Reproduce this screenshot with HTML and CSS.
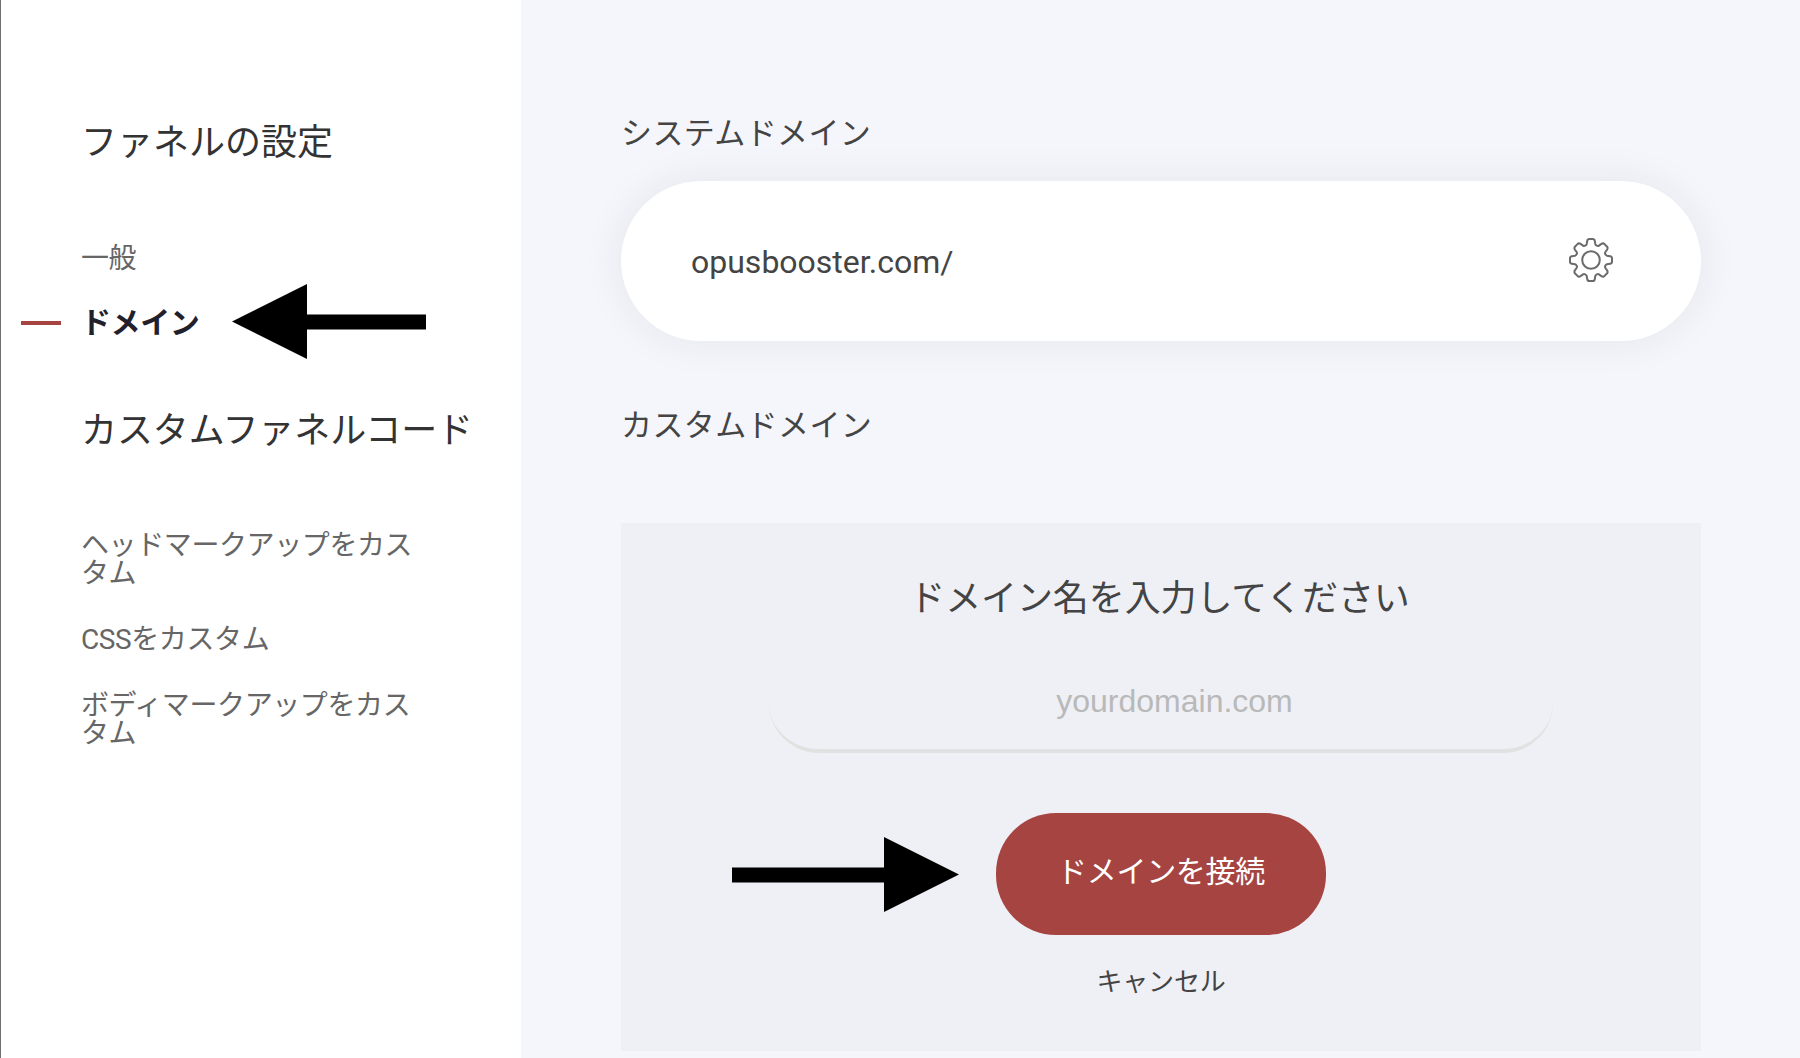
FILE: index.html
```html
<!DOCTYPE html>
<html lang="ja">
<head>
<meta charset="utf-8">
<title>ファネルの設定</title>
<link rel="stylesheet" href="styles.css">
</head>
<body>
<div class="app">
  <aside class="sidebar">
    <h2 class="sidebar-title">ファネルの設定</h2>
    <nav class="menu">
      <a class="menu-item">一般</a>
      <a class="menu-item active"><span class="marker"></span>ドメイン</a>
    </nav>
    <h2 class="sidebar-title code-title">カスタムファネルコード</h2>
    <nav class="menu code-menu">
      <a class="menu-item">ヘッドマークアップをカス<br>タム</a>
      <a class="menu-item">CSSをカスタム</a>
      <a class="menu-item">ボディマークアップをカス<br>タム</a>
    </nav>
  </aside>
  <main class="content">
    <h3 class="section-title">システムドメイン</h3>
    <section class="domain-card">
      <span class="domain-name">opusbooster.com/</span>
      <svg class="gear" viewBox="-23 -23 46 46" fill="none" stroke="#6b6b6b" stroke-width="2" stroke-linejoin="round">
        <circle r="8.8"/>
        <path d="M-3.8 -19Q-3.5 -21 -1.7 -21H1.7Q3.5 -21 3.8 -19L4.3 -16Q4.6 -14.8 5.8 -14.3Q7 -13.7 8 -14.4L10.4 -16.1Q12.1 -17.2 13.5 -15.9L15.9 -13.5Q17.2 -12.1 16.1 -10.4L14.4 -8Q13.7 -7 14.3 -5.8Q14.8 -4.6 16 -4.3L19 -3.8Q21 -3.5 21 -1.7V1.7Q21 3.5 19 3.8L16 4.3Q14.8 4.6 14.3 5.8Q13.7 7 14.4 8L16.1 10.4Q17.2 12.1 15.9 13.5L13.5 15.9Q12.1 17.2 10.4 16.1L8 14.4Q7 13.7 5.8 14.3Q4.6 14.8 4.3 16L3.8 19Q3.5 21 1.7 21H-1.7Q-3.5 21 -3.8 19L-4.3 16Q-4.6 14.8 -5.8 14.3Q-7 13.7 -8 14.4L-10.4 16.1Q-12.1 17.2 -13.5 15.9L-15.9 13.5Q-17.2 12.1 -16.1 10.4L-14.4 8Q-13.7 7 -14.3 5.8Q-14.8 4.6 -16 4.3L-19 3.8Q-21 3.5 -21 1.7V-1.7Q-21 -3.5 -19 -3.8L-16 -4.3Q-14.8 -4.6 -14.3 -5.8Q-13.7 -7 -14.4 -8L-16.1 -10.4Q-17.2 -12.1 -15.9 -13.5L-13.5 -15.9Q-12.1 -17.2 -10.4 -16.1L-8 -14.4Q-7 -13.7 -5.8 -14.3Q-4.6 -14.8 -4.3 -16Z"/>
      </svg>
    </section>
    <h3 class="section-title custom-title">カスタムドメイン</h3>
    <section class="connect-panel">
      <h2 class="panel-title">ドメイン名を入力してください</h2>
      <input class="domain-input" type="text" placeholder="yourdomain.com">
      <button class="connect-button">ドメインを接続</button>
      <a class="cancel">キャンセル</a>
    </section>
  </main>
  <svg class="arrow arrow-left" viewBox="0 0 194 75"><path d="M0 37.5L75 0V30.5H194V45.5H75V75Z"/></svg>
  <svg class="arrow arrow-right" viewBox="0 0 227 75"><path d="M227 37.5L152 0V30.5H0V45.5H152V75Z"/></svg>
</div>
</body>
</html>
```
FILE: styles.css
```css
* { box-sizing: border-box; }
body {
  margin: 0;
  overflow: hidden;
  font-family: Roboto, "Noto Sans CJK JP", sans-serif;
  color: #444;
}
h2, h3 { margin: 0; font-weight: 400; white-space: nowrap; }
.app { position: relative; display: flex; height: 1058px; }

.sidebar {
  flex: 0 0 521px;
  padding: 125px 0 0 80px;
  border-left: 1px solid #707074;
  background: #fff;
}
.sidebar-title { font-size: 36px; line-height: 36px; color: #333; }
.code-title { margin-top: 76px; letter-spacing: -0.1px; }
.menu { display: flex; flex-direction: column; gap: 36px; margin-top: 84px; }
.code-menu { gap: 38px; margin-top: 83px; }
.menu-item { position: relative; font-size: 28px; line-height: 28px; color: #666; letter-spacing: -0.4px; white-space: nowrap; }
.menu-item.active { font-size: 30px; font-weight: 700; color: #21202b; }
.marker { position: absolute; left: -60px; top: 12px; width: 40px; height: 4px; background: #a64442; }

.content { flex: 1; padding: 118px 99px 0 100px; background: #f4f6fb; }
.section-title { font-size: 31px; line-height: 32px; letter-spacing: 0.4px; }
.domain-card {
  display: flex;
  align-items: center;
  justify-content: space-between;
  height: 160px;
  margin-top: 31px;
  padding: 0 87px 0 70px;
  border-radius: 80px;
  background: #fff;
  box-shadow: 0 0 40px rgba(45, 40, 75, 0.08);
}
.domain-name { padding-top: 2px; font-size: 32px; line-height: 40px; }
.gear { width: 46px; height: 46px; margin-bottom: 2px; }
.custom-title { margin-top: 69px; }
.connect-panel {
  display: flex;
  flex-direction: column;
  align-items: center;
  height: 528px;
  margin-top: 81px;
  padding-top: 58px;
  background: #eff0f5;
}
.panel-title { font-size: 36px; line-height: 36px; margin-right: 3px; letter-spacing: -0.1px; }
.domain-input {
  width: 784px;
  height: 100px;
  margin-top: 36px;
  padding: 0 0 0 27px;
  border: 0;
  border-bottom: 4px solid #e1e1e1;
  border-radius: 50px;
  background: transparent;
  font: 32px/36px "Liberation Sans", Arial, sans-serif;
  text-align: center;
}
.domain-input::placeholder { color: #b9b9b9; opacity: 1; }
.connect-button {
  width: 330px;
  height: 122px;
  margin-top: 60px;
  padding: 0 0 4px;
  border: 0;
  border-radius: 60px;
  background: #a64442;
  color: #fff;
  font: 30px/36px Roboto, "Noto Sans CJK JP", sans-serif;
  letter-spacing: -0.3px;
}
.cancel { margin-top: 33px; font-size: 26px; line-height: 28px; letter-spacing: -0.2px; }

.arrow { position: absolute; height: 75px; fill: #000; }
.arrow-left { left: 232px; top: 283.5px; width: 194px; }
.arrow-right { left: 732px; top: 836.5px; width: 227px; }
```
